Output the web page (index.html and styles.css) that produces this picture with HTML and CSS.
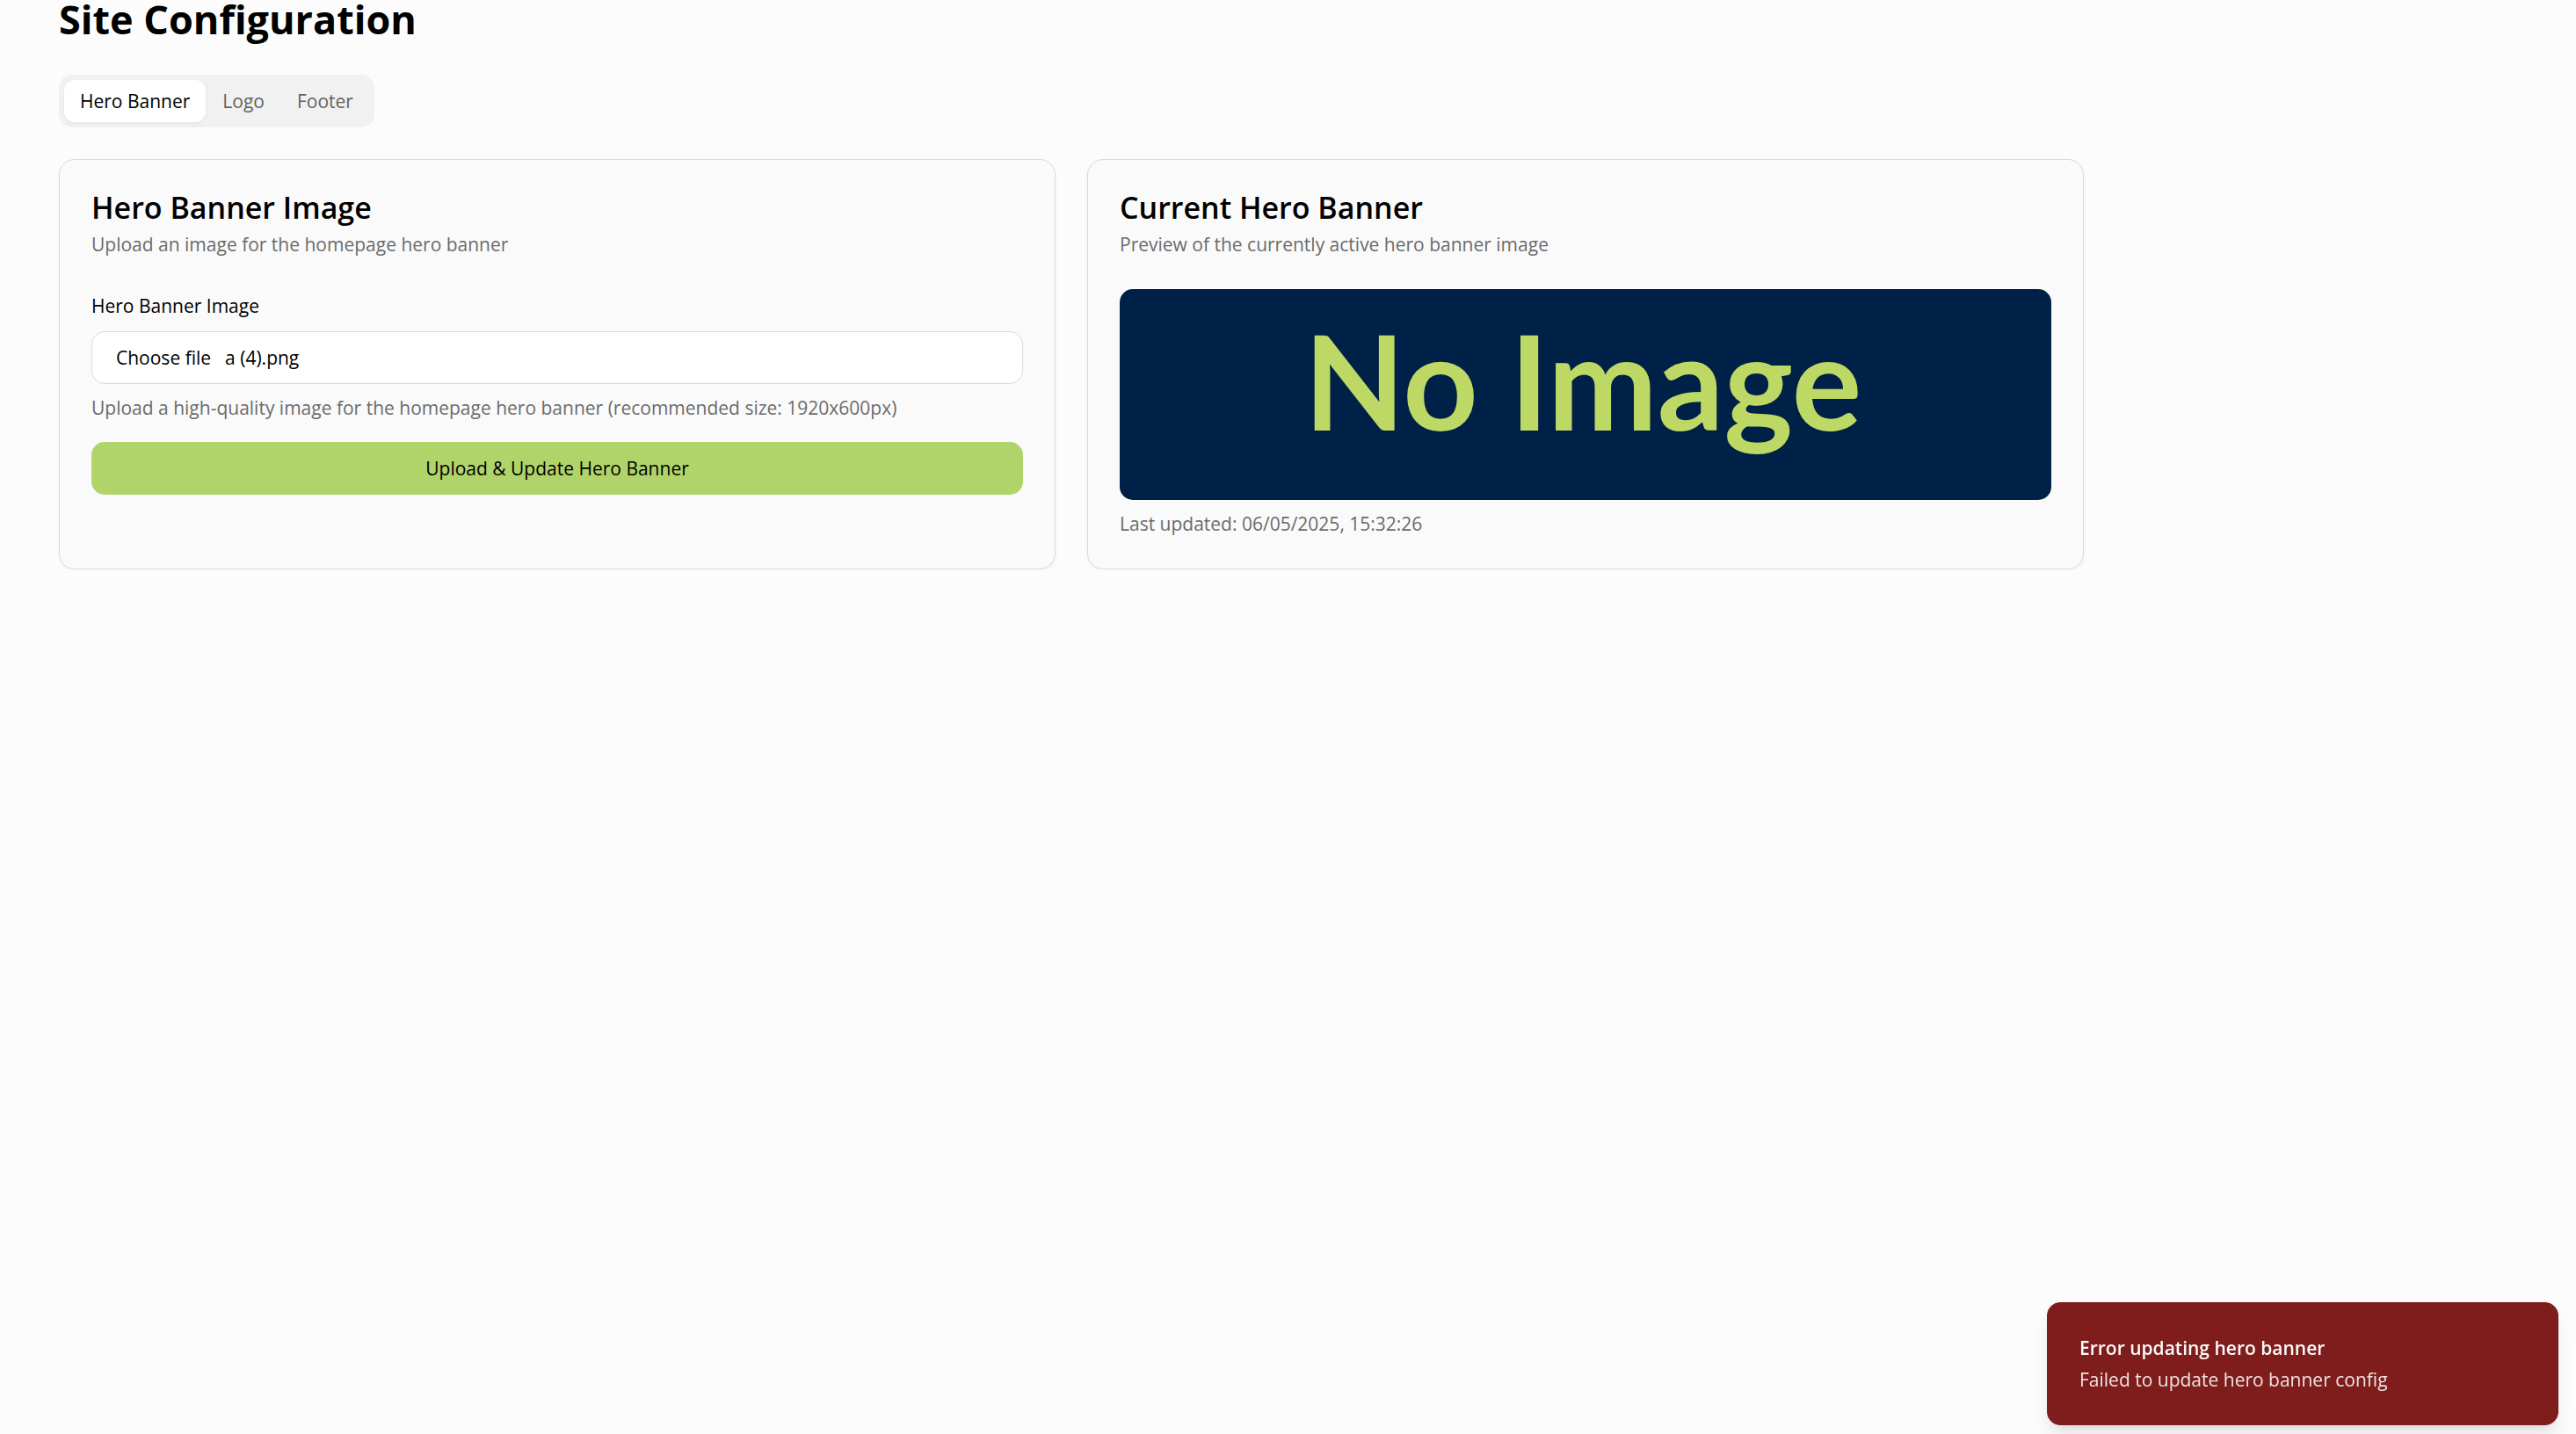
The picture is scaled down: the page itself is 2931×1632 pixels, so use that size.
FILE: index.html
```html
<!DOCTYPE html>
<html lang="en">
<head>
<meta charset="utf-8">
<meta name="viewport" content="width=device-width, initial-scale=1">
<title>Site Configuration</title>
<link rel="stylesheet" href="styles.css">
</head>
<body>
<main class="page">
  <h1 class="page-title">Site Configuration</h1>
  <div class="tabs" role="tablist" aria-label="Configuration sections">
    <button class="tab tab-active" type="button" role="tab" aria-selected="true">Hero Banner</button>
    <button class="tab" type="button" role="tab" aria-selected="false">Logo</button>
    <button class="tab" type="button" role="tab" aria-selected="false">Footer</button>
  </div>
  <div class="cards">
    <section class="card">
      <header class="card-header">
        <h2 class="card-title">Hero Banner Image</h2>
        <p class="muted">Upload an image for the homepage hero banner</p>
      </header>
      <form class="upload-form">
        <div class="field">
          <label class="field-label" for="hero-file">Hero Banner Image</label>
          <label class="file-box">
            <input class="file-input" id="hero-file" type="file" accept="image/*">
            <span class="file-action">Choose file</span>
            <span>a (4).png</span>
          </label>
          <p class="muted">Upload a high-quality image for the homepage hero banner (recommended size: 1920x600px)</p>
        </div>
        <button class="submit" type="submit">Upload &amp; Update Hero Banner</button>
      </form>
    </section>
    <section class="card">
      <header class="card-header">
        <h2 class="card-title">Current Hero Banner</h2>
        <p class="muted">Preview of the currently active hero banner image</p>
      </header>
      <div class="preview">No Image</div>
      <p class="muted">Last updated: 06/05/2025, 15:32:26</p>
    </section>
  </div>
</main>
<div class="toast" role="alert">
  <p class="toast-title">Error updating hero banner</p>
  <p class="toast-text">Failed to update hero banner config</p>
</div>
</body>
</html>
```

FILE: styles.css
```css
*,
*::before,
*::after {
  box-sizing: border-box;
}

body {
  margin: 0;
  background: #fcfcfc;
  color: #000;
  font-family: "Open Sans", "Noto Sans", sans-serif;
  font-size: 21px;
  line-height: 30px;
}

h1,
h2,
p {
  margin: 0;
}

button {
  border: 0;
  font: inherit;
  cursor: pointer;
}

.tab,
.submit,
.field-label,
.file-action {
  font-weight: 500;
}

.page {
  max-width: 2438px;
  padding: 0 67px;
}

.page-title {
  margin-bottom: 41px;
  font-size: 45px;
  font-weight: 700;
  line-height: 44px;
}

.tabs {
  display: inline-flex;
  gap: 1px;
  padding: 6px;
  border-radius: 15px;
  background: #f1f1f1;
}

.tab {
  padding: 9px 18px;
  border-radius: 12px;
  background: transparent;
  color: #636363;
}

.tab-active {
  background: #fff;
  color: #000;
  box-shadow: 0 2px 4px rgba(0, 0, 0, 0.05);
}

.cards {
  display: grid;
  grid-template-columns: repeat(auto-fit, minmax(min(100%, 600px), 1fr));
  gap: 36px;
  margin-top: 36px;
}

.card {
  padding: 36px;
  border: 1px solid #d9d9d9;
  border-radius: 18px;
  background: #fafafa;
  box-shadow: 0 2px 4px rgba(0, 0, 0, 0.05);
}

.card-header {
  display: grid;
  gap: 9px;
  margin-bottom: 36px;
}

.card-title {
  font-size: 34px;
  font-weight: 600;
  line-height: 36px;
}

.muted {
  color: #6b6b6b;
}

.upload-form {
  display: grid;
  gap: 24px;
}

.field {
  display: grid;
  gap: 12px;
}

.field-label {
  padding: 4px 0 2px;
}

.file-box {
  position: relative;
  display: flex;
  align-items: center;
  gap: 16px;
  height: 60px;
  padding: 0 27px;
  border: 1px solid #d9d9d9;
  border-radius: 15px;
  background: #fff;
  cursor: pointer;
}

/* Kept over the whole box so drops and clicks reach the native control. */
.file-input {
  position: absolute;
  inset: 0;
  width: 100%;
  opacity: 0;
}

.submit {
  padding: 15px 24px;
  border-radius: 15px;
  background: #b0d46a;
  color: #000;
}

.preview {
  height: 240px;
  margin-bottom: 12px;
  padding-right: 6px;
  overflow: hidden;
  border-radius: 15px;
  background: #002147;
  color: #bdd864;
  font-family: Lato, sans-serif;
  font-size: 149px;
  font-weight: 700;
  line-height: 208px;
  text-align: center;
}

.toast {
  position: fixed;
  right: 20px;
  bottom: 10px;
  display: grid;
  gap: 6px;
  width: min(582px, 100% - 40px);
  padding: 36px;
  border: 1px solid #7f1d1d;
  border-radius: 15px;
  background: #7f1d1d;
  color: #fafafa;
  box-shadow: 0 15px 22px -4px rgba(0, 0, 0, 0.1), 0 6px 9px -6px rgba(0, 0, 0, 0.1);
}

.toast-title {
  font-weight: 600;
}

.toast-text {
  opacity: 0.9;
}
```
